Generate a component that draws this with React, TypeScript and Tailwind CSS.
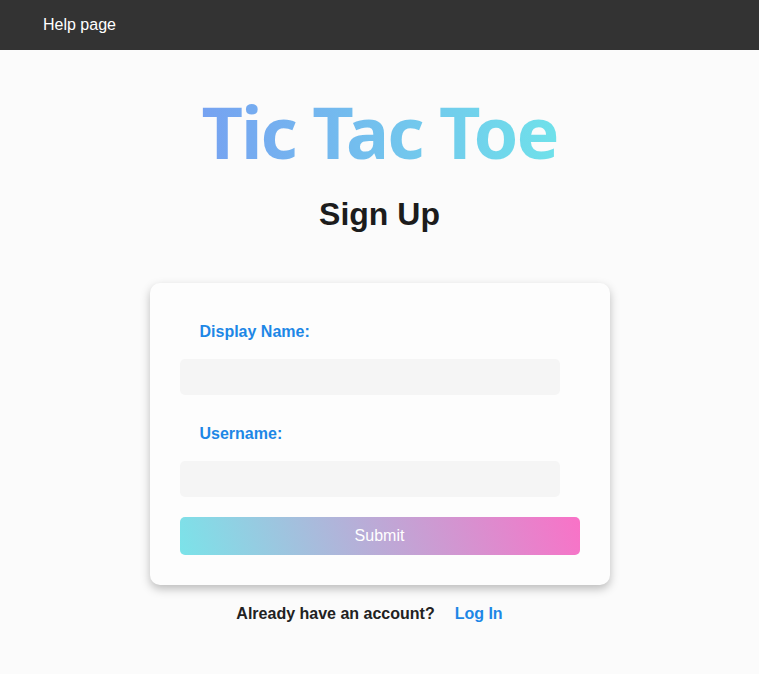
export default function App() {
  return (
    <div className="min-h-[674px] bg-[#fbfbfb] font-['Liberation_Sans',Arial,sans-serif]">
      {/* nav */}
      <nav className="h-[50px] bg-[#333333] flex items-center px-[43px]">
        <a className="text-white text-base">Help page</a>
      </nav>

      <main className="flex flex-col items-center">
        {/* title */}
        <h1 className="mt-[45px] text-[72px] leading-none tracking-[-2px] font-bold font-['Noto_Sans',sans-serif] bg-[linear-gradient(90deg,#76a2f1,#6fe1ea)] bg-clip-text text-transparent">
          Tic Tac Toe
        </h1>
        <h2 className="mt-[31px] text-[32px] leading-none font-bold text-[#1c1c1c]">
          Sign Up
        </h2>

        {/* form card */}
        <form className="mt-[53px] w-[460px] bg-[#fdfdfd] rounded-[10px] shadow-[0_4px_10px_rgba(0,0,0,0.25)] px-[30px] pt-[37px] pb-[30px] flex flex-col">
          <label className="ml-5 text-base leading-6 font-bold text-[#1d87e6]">
            Display Name:
          </label>
          <input
            type="text"
            className="mt-[15px] w-[380px] h-9 bg-[#f5f5f5] rounded-[5px] px-3 outline-none"
          />
          <label className="mt-[27px] ml-5 text-base leading-6 font-bold text-[#1d87e6]">
            Username:
          </label>
          <input
            type="text"
            className="mt-[15px] w-[380px] h-9 bg-[#f5f5f5] rounded-[5px] px-3 outline-none"
          />
          <button
            type="button"
            className="mt-5 w-[400px] h-[38px] rounded-[5px] text-white text-base bg-[linear-gradient(70deg,#7be3e9_0%,#b6afd8_45%,#f972c7_100%)]"
          >
            Submit
          </button>
        </form>

        {/* footer */}
        <div className="mt-[17px] pr-5 flex items-center gap-5 text-base leading-6 font-bold">
          <span className="text-[#222222]">Already have an account?</span>
          <a className="text-[#1d87e6]">Log In</a>
        </div>
      </main>
    </div>
  );
}
